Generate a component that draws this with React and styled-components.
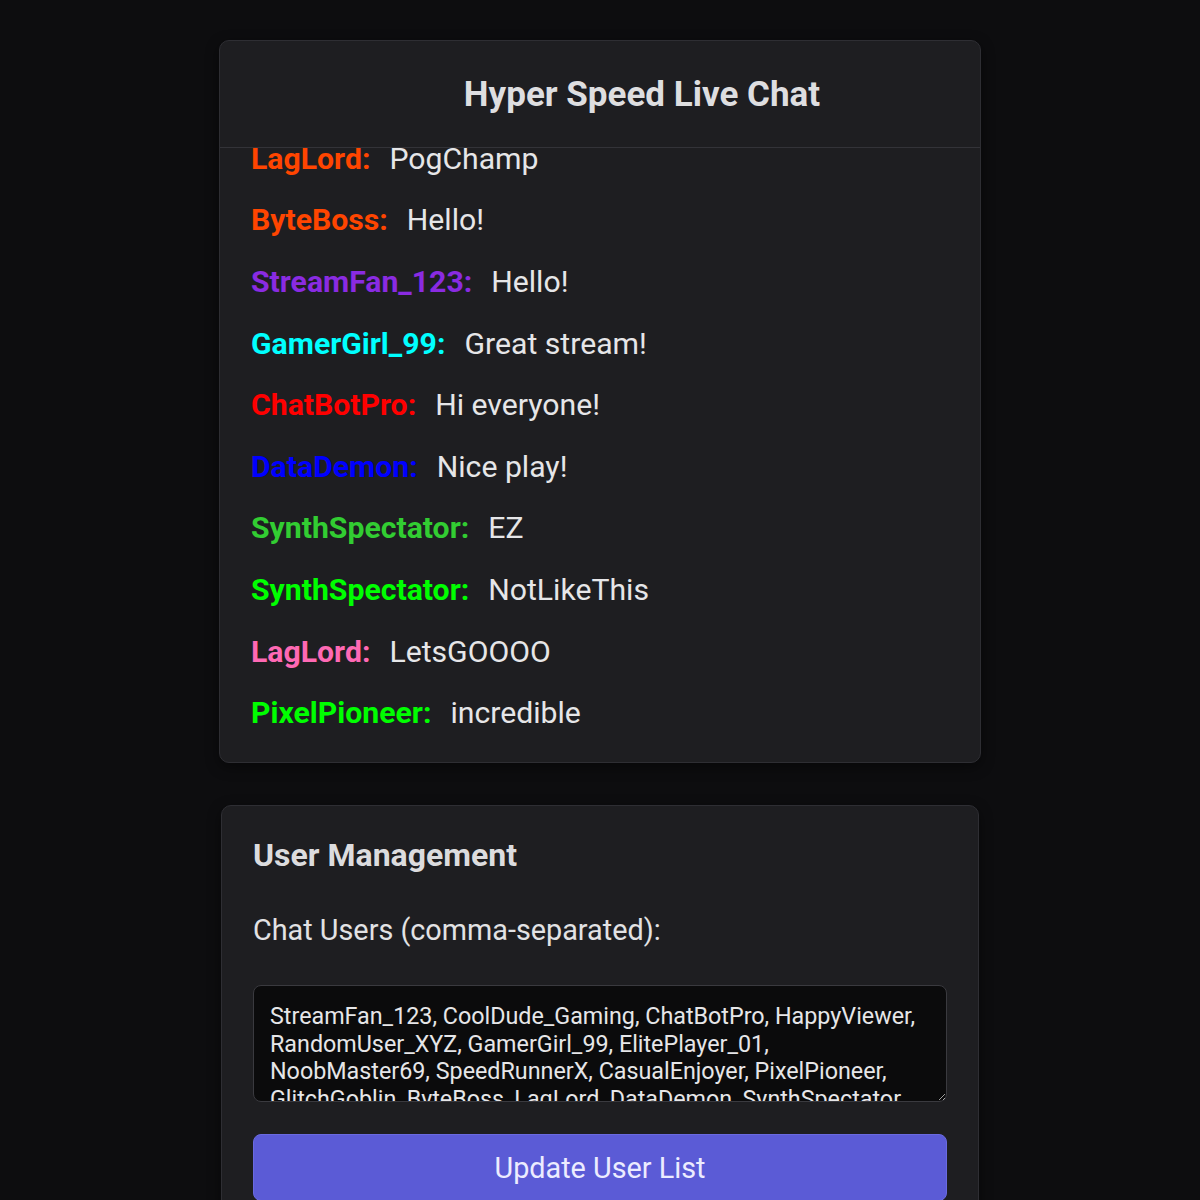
import React from "react";
import styled, { createGlobalStyle } from "styled-components";

const Global = createGlobalStyle`
  html, body {
    margin: 0;
    padding: 0;
    background: #0d0d0f;
    font-family: Roboto, "Liberation Sans", sans-serif;
  }
  * { box-sizing: border-box; }
`;

const Page = styled.div`
  display: flex;
  flex-direction: column;
  align-items: center;
  gap: 42px;
  padding-top: 40px;
  min-height: 1200px;
`;

const ChatCard = styled.section`
  width: 762px;
  height: 723px;
  background: #1e1e21;
  border: 1px solid #2e2e33;
  border-radius: 10px;
  box-shadow: 0 4px 14px rgba(0, 0, 0, 0.45);
  display: flex;
  flex-direction: column;
  overflow: hidden;
`;

const ChatHeader = styled.header`
  height: 107px;
  flex: none;
  border-bottom: 1px solid #333338;
  display: flex;
  align-items: center;
  justify-content: center;
  padding: 2px 0 0 84px;
`;

const Title = styled.h1`
  margin: 0;
  font-size: 35px;
  line-height: 42px;
  font-weight: 700;
  color: #dedee0;
`;

const MessageList = styled.div`
  flex: 1;
  min-height: 0;
  overflow: hidden;
  display: flex;
  flex-direction: column;
  justify-content: flex-end;
  padding: 0 31px 18px;
`;

const Row = styled.div`
  flex: none;
  display: flex;
  align-items: center;
  height: 61.6px;
  font-size: 30.2px;
  line-height: 42px;
  white-space: nowrap;
`;

const Name = styled.span`
  font-weight: 700;
  color: ${(p) => p.$color};
`;

const Text = styled.span`
  margin-left: 19px;
  color: #e6e6e8;
`;

const ManageCard = styled.section`
  width: 758px;
  background: #1e1e21;
  border: 1px solid #2e2e33;
  border-radius: 10px;
  box-shadow: 0 4px 14px rgba(0, 0, 0, 0.45);
  padding: 30px 31px 40px;
  display: flex;
  flex-direction: column;
`;

const SectionTitle = styled.h2`
  margin: 0;
  font-size: 32px;
  line-height: 38px;
  font-weight: 700;
  color: #dcdcde;
`;

const Label = styled.label`
  margin-top: 39px;
  font-size: 28.8px;
  line-height: 34px;
  color: #e2e2e4;
`;

const Area = styled.textarea`
  margin-top: 38px;
  width: 694px;
  height: 117px;
  background: #0b0b0c;
  border: 1px solid #3a3a3f;
  border-radius: 8px;
  padding: 17px 16px 16px;
  font-family: Roboto, "Liberation Sans", sans-serif;
  font-size: 23.3px;
  line-height: 27.7px;
  color: #e6e6e8;
  resize: vertical;
  outline: none;
  overflow: hidden;
`;

const Button = styled.button`
  margin-top: 32px;
  width: 694px;
  padding: 16px 0 14px;
  background: #5b5bd6;
  border: 1px solid #6a6ae0;
  border-radius: 8px;
  font-family: Roboto, "Liberation Sans", sans-serif;
  font-size: 28.8px;
  line-height: 35px;
  color: #ececff;
  cursor: pointer;
`;

const messages = [
  { user: "LagLord", color: "#ff4500", text: "PogChamp" },
  { user: "ByteBoss", color: "#ff4500", text: "Hello!" },
  { user: "StreamFan_123", color: "#8a2be2", text: "Hello!" },
  { user: "GamerGirl_99", color: "#00ffff", text: "Great stream!" },
  { user: "ChatBotPro", color: "#ff0000", text: "Hi everyone!" },
  { user: "DataDemon", color: "#0000ff", text: "Nice play!" },
  { user: "SynthSpectator", color: "#32cd32", text: "EZ" },
  { user: "SynthSpectator", color: "#00ff00", text: "NotLikeThis" },
  { user: "LagLord", color: "#ff69b4", text: "LetsGOOOO" },
  { user: "PixelPioneer", color: "#00ff00", text: "incredible" },
];

const users =
  "StreamFan_123, CoolDude_Gaming, ChatBotPro, HappyViewer, RandomUser_XYZ, GamerGirl_99, ElitePlayer_01, NoobMaster69, SpeedRunnerX, CasualEnjoyer, PixelPioneer, GlitchGoblin, ByteBoss, LagLord, DataDemon, SynthSpectator";

export default function App() {
  return (
    <>
      <Global />
      <Page>
        <ChatCard>
          <ChatHeader>
            <Title>Hyper Speed Live Chat</Title>
          </ChatHeader>
          <MessageList>
            {messages.map((m, i) => (
              <Row key={i}>
                <Name $color={m.color}>{m.user}:</Name>
                <Text>{m.text}</Text>
              </Row>
            ))}
          </MessageList>
        </ChatCard>
        <ManageCard>
          <SectionTitle>User Management</SectionTitle>
          <Label htmlFor="users">Chat Users (comma-separated):</Label>
          <Area id="users" defaultValue={users} />
          <Button>Update User List</Button>
        </ManageCard>
      </Page>
    </>
  );
}
